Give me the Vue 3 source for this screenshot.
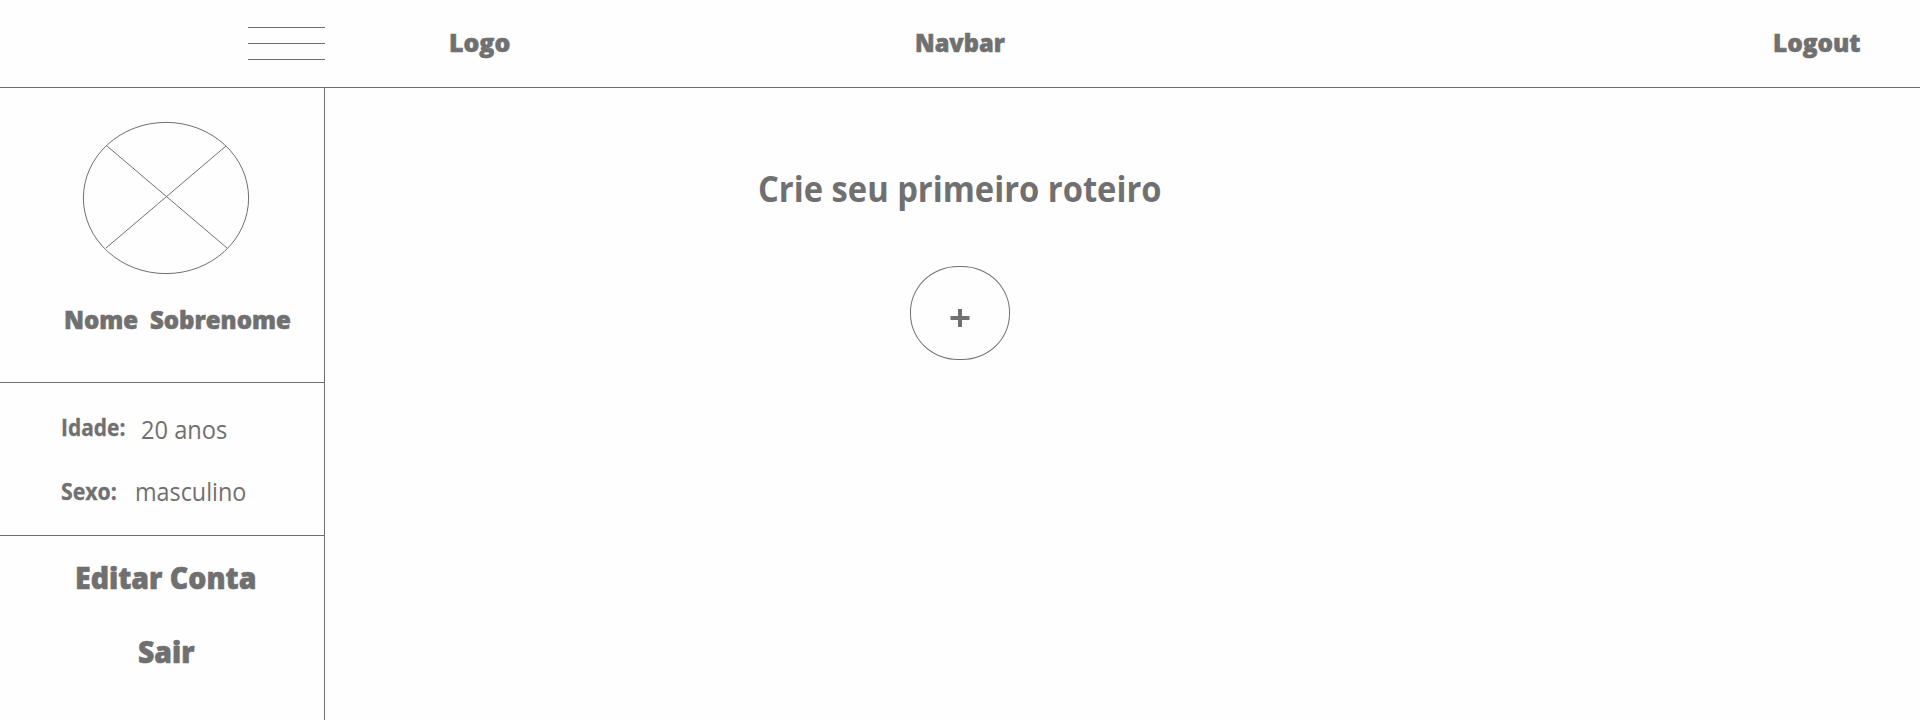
<script setup>
const details = [
  { key: 'age', label: 'Idade:', value: '20 anos' },
  { key: 'sex', label: 'Sexo:', value: 'masculino' },
]
</script>

<template>
  <div class="page">
    <header class="navbar">
      <div class="menu" aria-label="Menu"><i></i><i></i><i></i></div>
      <span class="nav-text logo">Logo</span>
      <span class="nav-text title">Navbar</span>
      <span class="nav-text logout">Logout</span>
    </header>
    <div class="body">
      <aside class="sidebar">
        <section class="profile">
          <svg class="avatar" width="168" height="154" viewBox="0 0 168 154">
            <ellipse cx="84" cy="77" rx="82.6" ry="75.6" />
            <path d="M25 25L145 127M144 25L24 127" />
          </svg>
          <div class="name"><span class="first">Nome</span><span class="last">Sobrenome</span></div>
        </section>
        <section class="details">
          <div v-for="d in details" :key="d.key" class="row" :class="d.key">
            <span class="label">{{ d.label }}</span>
            <span class="value">{{ d.value }}</span>
          </div>
        </section>
        <nav class="actions">
          <span class="edit">Editar Conta</span>
          <span class="exit">Sair</span>
        </nav>
      </aside>
      <main class="content">
        <h1>Crie seu primeiro roteiro</h1>
        <div class="add">
          <svg width="20" height="20" viewBox="0 0 20 20"><path d="M10 1V19M0.5 10H19.5" /></svg>
        </div>
      </main>
    </div>
  </div>
</template>

<style>
body {
  background: #fefefe;
}
</style>

<style scoped>
.page {
  display: flex;
  flex-direction: column;
  width: 1920px;
  height: 720px;
  overflow: hidden;
  background: #fefefe;
  color: #707070;
  font-family: "Open Sans", "Noto Sans", sans-serif;
  white-space: nowrap;
}
svg {
  display: block;
  fill: none;
  stroke: #707070;
}
.navbar {
  display: flex;
  box-sizing: border-box;
  height: 88px;
  flex: none;
  border-bottom: 1px solid #707070;
}
.menu {
  display: flex;
  flex-direction: column;
  gap: 15px;
  width: 77px;
  margin: 27px 0 0 248px;
}
.menu i {
  height: 1px;
  background: #707070;
}
.nav-text,
.first,
.last,
.label,
.value,
.edit,
.exit,
h1 {
  transform-origin: 0 0;
}
.nav-text,
.name,
.actions {
  -webkit-text-stroke: 0.6px #707070;
}
.nav-text {
  margin-top: 24px;
  font-size: 25.5px;
  line-height: 36px;
  font-weight: 800;
}
.logo {
  width: 466px;
  margin-left: 124px;
  transform: scaleX(0.975);
}
.title {
  width: 858px;
  transform: scaleX(0.925);
}
.logout {
  transform: scaleX(0.955);
}
.body {
  display: flex;
  flex: 1;
}
.sidebar {
  box-sizing: border-box;
  width: 325px;
  border-right: 1px solid #707070;
}
.profile {
  box-sizing: border-box;
  height: 295px;
  padding-top: 33px;
  border-bottom: 1px solid #707070;
}
.avatar {
  margin-left: 82px;
}
.name {
  display: flex;
  margin: 26px 0 0 64px;
  font-size: 25.5px;
  line-height: 36px;
  font-weight: 800;
}
.first {
  width: 86px;
  transform: scaleX(0.94);
}
.last {
  transform: scaleX(0.94);
}
.details {
  box-sizing: border-box;
  height: 153px;
  padding: 26px 0 0 61px;
  border-bottom: 1px solid #707070;
}
.row {
  display: flex;
  height: 63px;
  line-height: 36px;
}
.label {
  width: 80px;
  margin-top: 1px;
  font-size: 22.5px;
  font-weight: 700;
  transform: scaleX(0.93);
  -webkit-text-stroke: 0.3px #707070;
}
.sex .label {
  width: 74px;
  margin-top: 2px;
  transform: scaleX(0.945);
}
.value {
  margin-top: 2px;
  font-size: 25px;
  transform: scaleX(0.946);
}
.sex .value {
  margin-top: 1px;
  transform: scaleX(0.933);
}
.actions {
  display: flex;
  flex-direction: column;
  gap: 34px;
  padding-top: 22px;
  font-size: 29.5px;
  line-height: 40px;
  font-weight: 800;
}
.edit {
  margin-left: 75px;
  transform: scaleX(0.966);
}
.exit {
  margin-left: 138px;
  transform: scaleX(0.96);
}
.content {
  flex: 1;
}
h1 {
  margin: 76px 0 0 433px;
  font-size: 35px;
  line-height: 50px;
  font-weight: 700;
  transform: scaleX(0.935);
}
.add {
  display: flex;
  box-sizing: border-box;
  width: 100px;
  height: 94px;
  margin: 52px 0 0 585px;
  padding: 41px 0 0 39px;
  border: 1px solid #707070;
  border-radius: 48px / 46px;
}
.add svg {
  stroke-width: 4;
}
</style>
